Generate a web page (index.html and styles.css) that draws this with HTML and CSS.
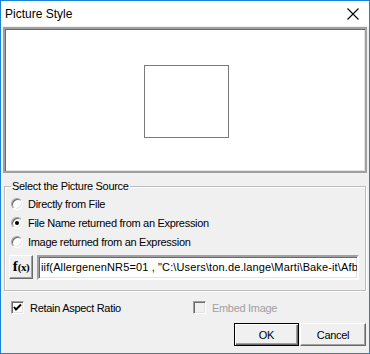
FILE: index.html
```html
<!DOCTYPE html>
<html>
<head>
<meta charset="utf-8">
<link rel="stylesheet" href="styles.css">
</head>
<body>
<div class="window">
  <div class="titlebar">
    <span class="title">Picture Style</span>
    <svg class="close" width="12" height="12" viewBox="0 0 12 12"><path d="M0.5 0.5 L11.5 11.5 M11.5 0.5 L0.5 11.5" stroke="#000" stroke-width="1.1" fill="none"/></svg>
  </div>
  <div class="body">
    <div class="preview"><div class="frame"></div></div>
    <fieldset class="group">
      <legend>Select the Picture Source</legend>
      <div class="radio-row"><span class="radio"></span><span>Directly from File</span></div>
      <div class="radio-row"><span class="radio on"></span><span>File Name returned from an Expression</span></div>
      <div class="radio-row"><span class="radio"></span><span>Image returned from an Expression</span></div>
      <div class="expr-row">
        <div class="fx"><b>f</b><span class="fxa">(x)</span></div>
        <div class="field">iif(AllergenenNR5=01 , "C:\Users\ton.de.lange\Marti\Bake-it\Afbeeldingen\Allergenen\01.png", "")</div>
      </div>
    </fieldset>
    <div class="checks">
      <div class="check-item"><span class="check on"><svg width="9" height="9" viewBox="0 0 9 9"><path d="M1 4 L3 6.5 L8 1.5" stroke="#000" stroke-width="2" fill="none"/></svg></span><span>Retain Aspect Ratio</span></div>
      <div class="check-item embed disabled"><span class="check"></span><span>Embed Image</span></div>
    </div>
    <div class="buttons">
      <div class="btn default"><span>OK</span></div>
      <div class="btn"><span>Cancel</span></div>
    </div>
  </div>
</div>
</body>
</html>
```
FILE: styles.css
```css
html, body { margin: 0; padding: 0; background: #f0f0f0; }
.window {
  width: 370px; height: 354px; box-sizing: border-box;
  border: 1px solid #1883d7; background: #f0f0f0;
  display: flex; flex-direction: column;
  font-family: "Liberation Sans", Arial, sans-serif; font-size: 11px; letter-spacing: -0.3px;
  color: #000;
}
.titlebar {
  height: 25px; background: #fff; display: flex; align-items: center;
  justify-content: space-between; padding: 0 10px 0 4px; flex: none;
}
.title { font-size: 12px; letter-spacing: 0; padding-top: 1px; }
.body { display: flex; flex-direction: column; flex: 1; padding: 0 2px 0 2px; }
.preview {
  margin-top: 1px; height: 146px; width: 364px; box-sizing: border-box;
  background: #fff;
  border-style: solid; border-width: 2px;
  border-color: #a0a0a0;
  box-shadow: inset 1px 1px 0 #696969, inset -1px -1px 0 #e3e3e3;
  display: flex; align-items: center; justify-content: center;
  padding-top: 3px;
}
.frame { width: 85px; height: 73px; box-sizing: border-box; border: 1px solid #7a7a7a; margin-left: 2px; }
.group {
  margin: 6px 0 0 1px; width: 362px; height: 112px; box-sizing: border-box;
  border: 1px solid #bcbcbc; box-shadow: inset 1px 1px 0 #fff, 1px 1px 0 #fff;
  padding: 1px 6px 0 6px;
}
.group legend { padding: 0 1px; margin-left: 0; line-height: 14px; height: 14px; }
.radio-row { height: 19px; display: flex; align-items: center; }
.radio {
  width: 12px; height: 12px; box-sizing: border-box; border-radius: 50%;
  background: #fff; border: 1px solid; border-color: #a0a0a0 #fff #fff #a0a0a0;
  box-shadow: inset 1px 1px 0 #696969, inset -1px -1px 0 #e3e3e3;
  margin-right: 5px; display: flex; align-items: center; justify-content: center; flex: none;
}
.radio.on::after { content: ""; width: 4px; height: 4px; border-radius: 50%; background: #000; }
.expr-row { display: flex; align-items: center; margin-top: 3px; height: 26px; margin-left: -2px; }
.fx {
  width: 24px; height: 24px; box-sizing: border-box; flex: none;
  border: 1px solid; border-color: #fff #696969 #696969 #fff;
  box-shadow: inset -1px -1px 0 #a0a0a0; background: #f0f0f0;
  font-family: "Liberation Serif", serif; font-size: 15px; letter-spacing: 0;
  display: flex; align-items: center; justify-content: center; padding-bottom: 1px;
}
.fxa { font-weight: bold; font-size: 11px; letter-spacing: -0.5px; }
.field {
  margin-left: 4px; width: 322px; height: 25px; box-sizing: border-box;
  background: #fff; border: 2px solid; border-color: #a0a0a0 #fff #fff #a0a0a0;
  box-shadow: inset 1px 1px 0 #696969, inset -1px -1px 0 #e3e3e3;
  white-space: nowrap; overflow: hidden; line-height: 21px; padding-left: 2px;
  letter-spacing: 0.13px;
}
.checks { display: flex; height: 19px; margin-top: 7px; padding-left: 8px; align-items: center; }
.check-item { display: flex; align-items: center; }
.check-item.embed { margin-left: 72px; }
.check {
  width: 13px; height: 13px; box-sizing: border-box; flex: none; background: #fff;
  border: 1px solid; border-color: #a0a0a0 #fff #fff #a0a0a0;
  box-shadow: inset 1px 1px 0 #696969, inset -1px -1px 0 #e3e3e3;
  margin-right: 6px; display: flex; align-items: center; justify-content: center;
}
.disabled { color: #a0a0a0; }
.disabled .check { background: #f0f0f0; }
.buttons { display: flex; justify-content: flex-end; margin-top: 6px; gap: 1px; padding-right: 1px; }
.btn {
  height: 23px; box-sizing: border-box; width: 65px;
  border: 1px solid; border-color: #fff #696969 #696969 #fff;
  box-shadow: inset -1px -1px 0 #a0a0a0; background: #f0f0f0;
  display: flex; align-items: center; justify-content: center;
}
.btn.default { border-color: #000; box-shadow: inset 1px 1px 0 #fff, inset -1px -1px 0 #696969, inset -2px -2px 0 #a0a0a0; }
.btn + .btn { width: 66px; }
```
